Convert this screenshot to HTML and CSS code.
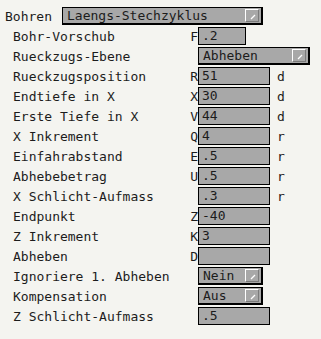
FILE: index.html
```html
<!DOCTYPE html>
<html lang="de">
<head>
    <meta charset="UTF-8">
    <meta name="viewport" content="width=device-width, initial-scale=1.0">
    <title>Bohren</title>
    <link rel="stylesheet" href="styles.css">
</head>
<body>
    <div class="head">
        <span class="title">Bohren</span>
        <div class="select wide">Laengs-Stechzyklus<span class="arrow"><svg width="6" height="6" viewBox="0 0 6 6"><path d="M1 5 L5 1" stroke="#fff" stroke-width="1.2"/></svg></span></div>
    </div>
    <div class="form">
        <span class="label">Bohr-Vorschub</span><span class="code">F</span><div class="cell"><div class="field short">.2</div></div><span class="unit"></span>
        <span class="label">Rueckzugs-Ebene</span><span class="code"></span><div class="cell span2"><div class="select mid">Abheben<span class="arrow"><svg width="6" height="6" viewBox="0 0 6 6"><path d="M1 5 L5 1" stroke="#fff" stroke-width="1.2"/></svg></span></div></div>
        <span class="label">Rueckzugsposition</span><span class="code">R</span><div class="cell"><div class="field">51</div></div><span class="unit">d</span>
        <span class="label">Endtiefe in X</span><span class="code">X</span><div class="cell"><div class="field">30</div></div><span class="unit">d</span>
        <span class="label">Erste Tiefe in X</span><span class="code">V</span><div class="cell"><div class="field">44</div></div><span class="unit">d</span>
        <span class="label">X Inkrement</span><span class="code">Q</span><div class="cell"><div class="field">4</div></div><span class="unit">r</span>
        <span class="label">Einfahrabstand</span><span class="code">E</span><div class="cell"><div class="field">.5</div></div><span class="unit">r</span>
        <span class="label">Abhebebetrag</span><span class="code">U</span><div class="cell"><div class="field">.5</div></div><span class="unit">r</span>
        <span class="label">X Schlicht-Aufmass</span><span class="code"></span><div class="cell"><div class="field">.3</div></div><span class="unit">r</span>
        <span class="label">Endpunkt</span><span class="code">Z</span><div class="cell"><div class="field">-40</div></div><span class="unit"></span>
        <span class="label">Z Inkrement</span><span class="code">K</span><div class="cell"><div class="field">3</div></div><span class="unit"></span>
        <span class="label">Abheben</span><span class="code">D</span><div class="cell"><div class="field"></div></div><span class="unit"></span>
        <span class="label">Ignoriere 1. Abheben</span><span class="code"></span><div class="cell"><div class="select small">Nein<span class="arrow"><svg width="6" height="6" viewBox="0 0 6 6"><path d="M1 5 L5 1" stroke="#fff" stroke-width="1.2"/></svg></span></div></div><span class="unit"></span>
        <span class="label">Kompensation</span><span class="code"></span><div class="cell"><div class="select small">Aus<span class="arrow"><svg width="6" height="6" viewBox="0 0 6 6"><path d="M1 5 L5 1" stroke="#fff" stroke-width="1.2"/></svg></span></div></div><span class="unit"></span>
        <span class="label">Z Schlicht-Aufmass</span><span class="code"></span><div class="cell"><div class="field">.5</div></div><span class="unit"></span>
    </div>
</body>
</html>
```
FILE: styles.css
```css
body {
    margin: 0;
    background: #f4f4f0;
    color: #1c1c1c;
    font-family: "DejaVu Sans Mono", monospace;
    font-size: 13px;
}

.head {
    display: flex;
    align-items: center;
    padding: 7px 0 0 5px;
    height: 18px;
}

.title {
    width: 57px;
}

.form {
    display: grid;
    grid-template-columns: 177px 8px 79px auto;
    grid-auto-rows: 18px;
    row-gap: 2px;
    padding: 2px 0 0 13px;
    align-items: center;
}

.code {
    text-align: right;
}

.span2 {
    grid-column: span 2;
}

.field,
.select {
    box-sizing: border-box;
    height: 18px;
    background: #a8a8a8;
    line-height: 16px;
    padding-left: 4px;
    white-space: nowrap;
}

.field {
    width: 72px;
    border: 1px solid #000;
    padding-left: 3px;
}

.field.short {
    width: 48px;
}

.select {
    position: relative;
    border: solid #000;
    border-width: 1px 2px 2px 1px;
    line-height: 15px;
}

.select.wide { width: 201px; }
.select.mid { width: 112px; }
.select.small { width: 65px; }

.arrow {
    position: absolute;
    right: 2px;
    top: 1px;
    box-sizing: border-box;
    width: 14px;
    height: 13px;
    border: 1px solid;
    border-color: #fff #7a7a7a #7a7a7a #fff;
    display: flex;
    align-items: center;
    justify-content: center;
}

.arrow svg {
    margin: 2px 0 0 1px;
}
```
